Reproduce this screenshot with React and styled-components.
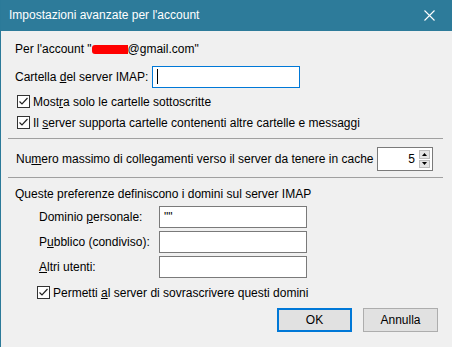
import styled, { createGlobalStyle } from 'styled-components'

const GlobalStyle = createGlobalStyle`
    html, body {
        margin: 0;
        padding: 0;
        background: #f0f0f0;
    }
    body {
        font-family: "Liberation Sans", Arial, sans-serif;
        font-size: 12px;
        color: #000;
    }
`

const Window = styled.div`
    width: 452px;
    height: 347px;
    box-sizing: border-box;
    border-left: 1px solid #2b7a99;
    background: #f0f0f0;
    display: flex;
    flex-direction: column;
    overflow: hidden;
`

const TitleBar = styled.div`
    height: 31px;
    flex-shrink: 0;
    background: #2d7b9a;
    color: #fff;
    display: flex;
    align-items: center;
    justify-content: space-between;
    padding: 0 0 1px 8px;
    box-sizing: border-box;
    font-size: 12px;
`

const CloseButton = styled.div`
    width: 46px;
    height: 30px;
    display: flex;
    align-items: center;
    justify-content: center;
`

const Body = styled.div`
    display: flex;
    flex-direction: column;
    padding-top: 10px;
`

const Row = styled.div`
    display: flex;
    align-items: center;
    height: ${p => p.h || 16}px;
    margin-top: ${p => p.mt || 0}px;
    padding-left: ${p => p.pl || 14}px;
    padding-right: ${p => p.pr || 0}px;
    justify-content: ${p => p.justify || 'flex-start'};
`

const Redacted = styled.span`
    display: inline-block;
    width: 36px;
    height: 9px;
    background: #f00;
    border-radius: 3px 0 0 3px;
    vertical-align: -1px;
`

const Label = styled.span`
    width: ${p => p.w ? p.w + 'px' : 'auto'};
    flex-shrink: 0;
    white-space: nowrap;
`

const Input = styled.div`
    width: 148px;
    height: 22px;
    box-sizing: border-box;
    background: #fff;
    border: 1px solid ${p => p.focused ? '#0078d7' : '#7a7a7a'};
    display: flex;
    align-items: center;
    padding-left: 4px;
    font-size: 12px;
    color: #000;
`

const Caret = styled.span`
    width: 1px;
    height: 15px;
    background: #000;
`

const CheckRow = styled.label`
    display: flex;
    align-items: center;
    height: 21px;
    padding-left: ${p => p.pl || 16}px;
    margin-top: ${p => p.mt || 0}px;
    gap: 3px;
    white-space: nowrap;
`

const Box = styled.span`
    width: 13px;
    height: 13px;
    box-sizing: border-box;
    border: 1px solid #333;
    background: #fff;
    display: flex;
    align-items: center;
    justify-content: center;
`

const Separator = styled.div`
    height: 1px;
    background: #a0a0a0;
    margin: ${p => p.mt}px 9px 0 7px;
`

const Spin = styled.div`
    width: 56px;
    height: 24px;
    box-sizing: border-box;
    border: 1px solid #7a7a7a;
    background: #fff;
    display: flex;
    align-items: center;
    justify-content: flex-end;
    padding: 2px;
`

const SpinValue = styled.span`
    margin-right: 4px;
`

const SpinButtons = styled.div`
    width: 11px;
    height: 18px;
    display: flex;
    flex-direction: column;
    gap: 1px;
`

const SpinButton = styled.div`
    flex: 1;
    background: #e5e5e5;
    border: 1px solid #bdbdbd;
    display: flex;
    align-items: center;
    justify-content: center;
`

const DomainGrid = styled.div`
    display: grid;
    grid-template-columns: 120px 148px;
    grid-auto-rows: 22px;
    row-gap: 3px;
    align-items: center;
    padding-left: 38px;
    margin-top: 4px;
`

const Buttons = styled.div`
    display: flex;
    justify-content: flex-end;
    gap: 11px;
    padding-right: 14px;
    margin-top: 5px;
`

const Button = styled.div`
    width: 75px;
    height: 24px;
    box-sizing: border-box;
    background: #e1e1e1;
    border: ${p => p.primary ? '2px solid #0078d7' : '1px solid #adadad'};
    display: flex;
    align-items: center;
    justify-content: center;
`

const Check = () => (
    <Box>
        <svg width="11" height="11" viewBox="0 0 11 11">
            <path d="M1.5 5.5 L4 8 L9.5 2" fill="none" stroke="#222" strokeWidth="1.2" />
        </svg>
    </Box>
)

const Arrow = ({ up }) => (
    <svg width="5" height="3" viewBox="0 0 5 3">
        <path d={up ? 'M0 3 L2.5 0 L5 3 Z' : 'M0 0 L2.5 3 L5 0 Z'} fill="#000" />
    </svg>
)

const App = () => {
    return (
        <Window>
            <GlobalStyle />
            <TitleBar>
                <span>Impostazioni avanzate per l'account</span>
                <CloseButton>
                    <svg width="11" height="11" viewBox="0 0 11 11">
                        <path d="M0.5 0.5 L10.5 10.5 M10.5 0.5 L0.5 10.5" stroke="#fff" strokeWidth="1.1" />
                    </svg>
                </CloseButton>
            </TitleBar>
            <Body>
                <Row h={16}>
                    Per l'account "<Redacted />@gmail.com"
                </Row>
                <Row h={23} mt={8}>
                    <Label w={137}>Cartella <u>d</u>el server IMAP:</Label>
                    <Input focused><Caret /></Input>
                </Row>
                <CheckRow mt={3}>
                    <Check />
                    <span>Most<u>r</u>a solo le cartelle sottoscritte</span>
                </CheckRow>
                <CheckRow>
                    <Check />
                    <span>Il <u>s</u>erver supporta cartelle contenenti altre cartelle e messaggi</span>
                </CheckRow>
                <Separator mt={5} />
                <Row h={24} mt={8} pl={15} pr={19} justify="space-between">
                    <Label>Nu<u>m</u>ero massimo di collegamenti verso il server da tenere in cache</Label>
                    <Spin>
                        <SpinValue>5</SpinValue>
                        <SpinButtons>
                            <SpinButton><Arrow up /></SpinButton>
                            <SpinButton><Arrow /></SpinButton>
                        </SpinButtons>
                    </Spin>
                </Row>
                <Separator mt={6} />
                <Row h={16} mt={8}>
                    Queste preferenze definiscono i domini sul server IMAP
                </Row>
                <DomainGrid>
                    <Label>Dominio <u>p</u>ersonale:</Label>
                    <Input>{'""'}</Input>
                    <Label>P<u>u</u>bblico (condiviso):</Label>
                    <Input />
                    <Label><u>A</u>ltri utenti:</Label>
                    <Input />
                </DomainGrid>
                <CheckRow pl={36} mt={4}>
                    <Check />
                    <span>Permetti <u>a</u>l server di sovrascrivere questi domini</span>
                </CheckRow>
                <Buttons>
                    <Button primary>OK</Button>
                    <Button>Annulla</Button>
                </Buttons>
            </Body>
        </Window>
    )
}

export default App
